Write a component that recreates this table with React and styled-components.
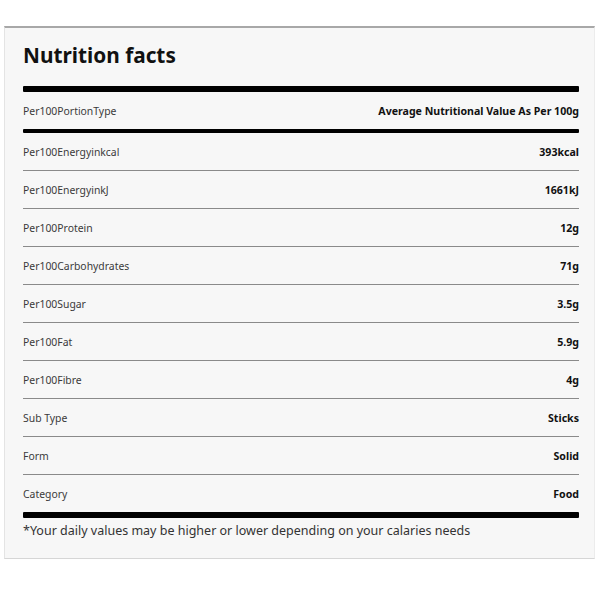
import React from "react";
import styled, { createGlobalStyle } from "styled-components";

const Global = createGlobalStyle`
  body {
    margin: 0;
    background: #fff;
    font-family: "Noto Sans", "DejaVu Sans", sans-serif;
  }
`;

const Page = styled.div`
  padding: 26px 0 0 4px;
`;

const Card = styled.section`
  box-sizing: border-box;
  width: 591px;
  background: #f7f7f7;
  border-top: 2px solid #a8a8a8;
  border-left: 1px solid #e4e4e4;
  border-right: 1px solid #ececec;
  border-bottom: 1px solid #d6d6d6;
  padding: 13px 15px 19px 18px;
`;

const Title = styled.h2`
  margin: 0;
  font-size: 20.8px;
  line-height: 28px;
  font-weight: 700;
  color: #111;
`;

const Bar = styled.div`
  height: ${(p) => p.$h}px;
  background: #000;
  border-radius: 1px;
  margin-top: ${(p) => p.$mt || 0}px;
`;

const Row = styled.div`
  display: flex;
  align-items: center;
  justify-content: space-between;
  height: ${(p) => p.$h || 37}px;
  border-bottom: ${(p) => (p.$last ? "none" : "1px solid #8a8a8a")};
  font-size: 10.4px;
`;

const Label = styled.span`
  color: #3a3a3a;
`;

const Value = styled.span`
  color: #111;
  font-weight: 700;
  font-size: 10.6px;
`;

const Note = styled.p`
  margin: 5px 0 0 0;
  font-size: 12.5px;
  line-height: 16px;
  color: #333;
`;

const rows = [
  ["Per100Energyinkcal", "393kcal"],
  ["Per100EnergyinkJ", "1661kJ"],
  ["Per100Protein", "12g"],
  ["Per100Carbohydrates", "71g"],
  ["Per100Sugar", "3.5g"],
  ["Per100Fat", "5.9g"],
  ["Per100Fibre", "4g"],
  ["Sub Type", "Sticks"],
  ["Form", "Solid"],
  ["Category", "Food"],
];

export default function App() {
  return (
    <Page>
      <Global />
      <Card>
        <Title>Nutrition facts</Title>
        <Bar $h={6} $mt={17} />
        <Row $h={37} $last>
          <Label>Per100PortionType</Label>
          <Value>Average Nutritional Value As Per 100g</Value>
        </Row>
        <Bar $h={4} />
        {rows.map(([k, v], i) => (
          <Row key={k} $last={i === rows.length - 1}>
            <Label>{k}</Label>
            <Value>{v}</Value>
          </Row>
        ))}
        <Bar $h={6} />
        <Note>*Your daily values may be higher or lower depending on your calaries needs</Note>
      </Card>
    </Page>
  );
}
